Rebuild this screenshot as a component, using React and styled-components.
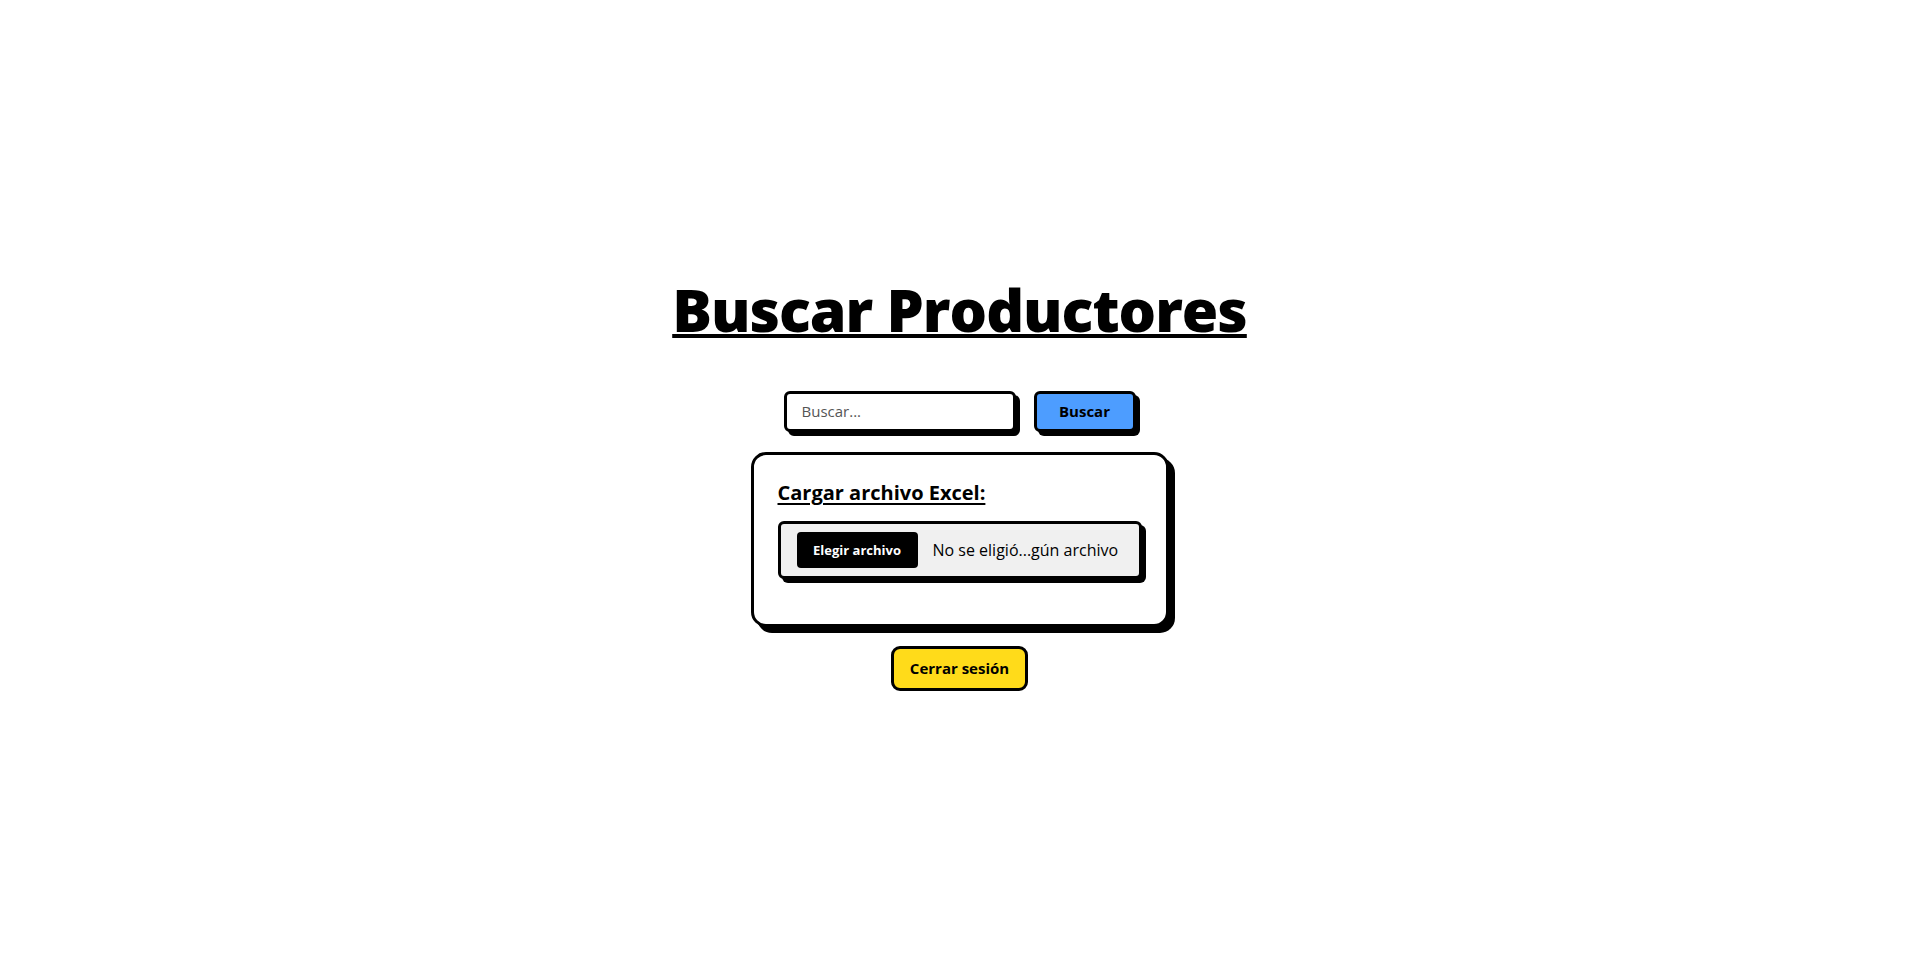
import React from "react";
import styled, { createGlobalStyle } from "styled-components";

const Global = createGlobalStyle`
  * { box-sizing: border-box; }
  html, body { margin: 0; padding: 0; background: #ffffff; }
  body { font-family: "Open Sans", "Noto Sans", sans-serif; color: #000; }
`;

const Page = styled.main`
  min-height: 100vh;
  display: flex;
  flex-direction: column;
  align-items: center;
  justify-content: center;
`;

const Title = styled.h1`
  margin: 0 0 46px;
  font-size: 59px;
  font-weight: 800;
  line-height: 1.2;
  text-decoration: underline;
  text-decoration-thickness: 4px;
  text-underline-offset: 2px;
  letter-spacing: -1px;
`;

const SearchRow = styled.div`
  display: flex;
  gap: 18px;
  margin-bottom: 20px;
`;

const SearchInput = styled.input`
  width: 232px;
  height: 41px;
  padding: 0 15px;
  border: 3px solid #000;
  border-radius: 6px;
  box-shadow: 4px 4px 0 #000;
  font-family: inherit;
  font-size: 15px;
  background: #fff;
  outline: none;
  &::placeholder { color: #555; }
`;

const Button = styled.button`
  width: ${(p) => (p.$w ? `${p.$w}px` : "auto")};
  height: ${(p) => p.$h || 41}px;
  padding: 0 ${(p) => p.$px ?? 20}px;
  border: 3px solid #000;
  border-radius: ${(p) => p.$r || 6}px;
  background: ${(p) => p.$bg};
  box-shadow: ${(p) => (p.$shadow ? "4px 4px 0 #000" : "none")};
  font-family: inherit;
  font-size: 15px;
  font-weight: 700;
  color: #000;
  cursor: pointer;
`;

const Card = styled.section`
  width: 418px;
  padding: 24px 24px 45px;
  border: 3px solid #000;
  border-radius: 15px;
  box-shadow: 6px 6px 0 #000;
  background: #fff;
  margin-bottom: 19px;
`;

const CardTitle = styled.h3`
  margin: 0 0 14px;
  font-size: 20px;
  font-weight: 700;
  line-height: 1.4;
  text-decoration: underline;
  text-decoration-thickness: 2px;
  text-underline-offset: 3px;
`;

const FileBox = styled.div`
  display: flex;
  align-items: center;
  gap: 15px;
  width: 364px;
  height: 58px;
  padding: 0 16px;
  border: 3px solid #000;
  border-radius: 6px;
  background: #f0f0f0;
  box-shadow: 4px 4px 0 #000;
`;

const FileButton = styled.span`
  display: inline-flex;
  align-items: center;
  justify-content: center;
  width: 121px;
  height: 36px;
  border-radius: 4px;
  background: #000;
  color: #fff;
  font-size: 13px;
  font-weight: 700;
`;

const FileName = styled.span`
  font-size: 16px;
  color: #000;
  white-space: nowrap;
`;

export default function App() {
  return (
    <>
      <Global />
      <Page>
        <Title>Buscar Productores</Title>
        <SearchRow>
          <SearchInput placeholder="Buscar..." />
          <Button $bg="#4d9dff" $shadow $px={0} $w={102}>
            Buscar
          </Button>
        </SearchRow>
        <Card>
          <CardTitle>Cargar archivo Excel:</CardTitle>
          <FileBox>
            <FileButton>Elegir archivo</FileButton>
            <FileName>No se eligió...gún archivo</FileName>
          </FileBox>
        </Card>
        <Button $bg="#ffdb1a" $h={45} $px={16} $r={9}>
          Cerrar sesión
        </Button>
      </Page>
    </>
  );
}
